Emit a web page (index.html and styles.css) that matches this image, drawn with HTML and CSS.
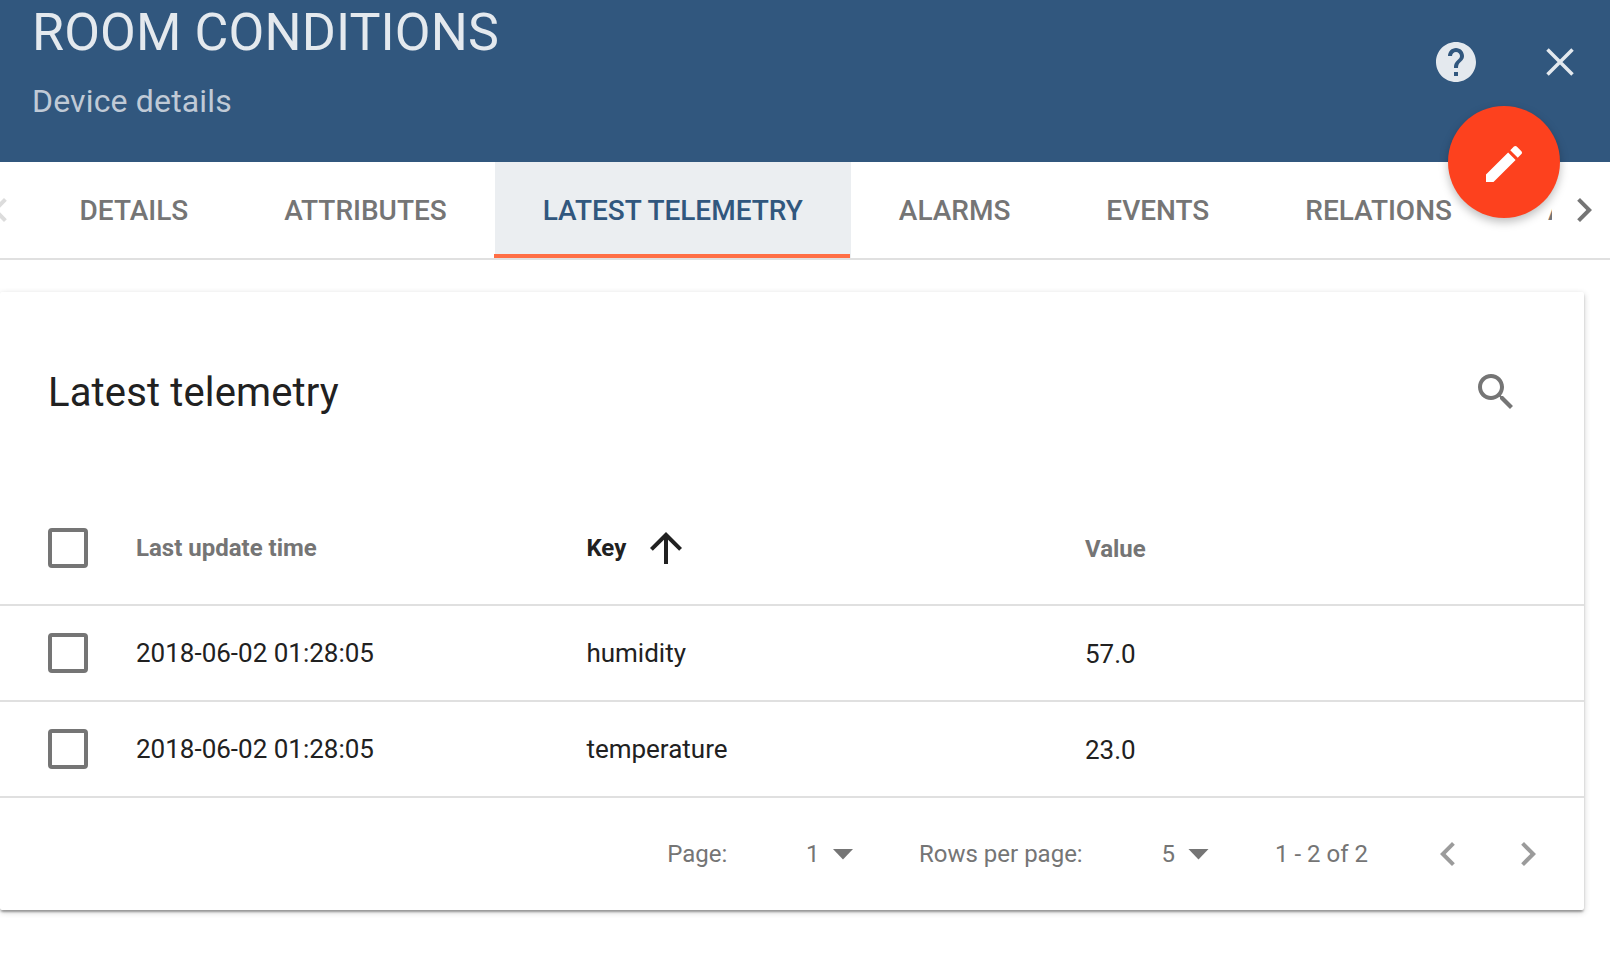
FILE: index.html
```html
<!DOCTYPE html>
<html lang="en">
<head>
<meta charset="utf-8">
<title>Device details</title>
<link rel="stylesheet" href="styles.css">
</head>
<body>
<header class="header">
  <div class="heading">
    <h1 class="title">Room conditions</h1>
    <p class="subtitle">Device details</p>
  </div>
  <div class="header-actions">
    <svg class="icon" viewBox="0 0 24 24"><path d="M12 2C6.48 2 2 6.48 2 12s4.48 10 10 10 10-4.48 10-10S17.52 2 12 2zm1 17h-2v-2h2v2zm2.07-7.75l-.9.92C13.45 12.9 13 13.5 13 15h-2v-.5c0-1.1.45-2.1 1.17-2.83l1.24-1.26c.37-.36.59-.86.59-1.41 0-1.1-.9-2-2-2s-2 .9-2 2H8c0-2.21 1.79-4 4-4s4 1.79 4 4c0 .88-.36 1.68-.93 2.25z"/></svg>
    <svg class="icon" viewBox="0 0 24 24"><path d="M5.75 5.75L18.25 18.25M18.25 5.75L5.75 18.25" fill="none" stroke="currentColor" stroke-width="1.75"/></svg>
  </div>
  <button class="fab" aria-label="Edit"><svg class="icon" viewBox="0 0 24 24"><path d="M3 17.25V21h3.75L17.81 9.94l-3.75-3.75L3 17.25zM20.71 7.04c.39-.39.39-1.02 0-1.41l-2.34-2.34c-.39-.39-1.02-.39-1.41 0l-1.83 1.83 3.75 3.75 1.83-1.83z"/></svg></button>
</header>
<nav class="tabs">
  <div class="tabs-prev"><svg class="icon" viewBox="0 0 24 24"><path d="M15.41 7.41L14 6l-6 6 6 6 1.41-1.41L10.83 12z"/></svg></div>
  <div class="tabs-canvas">
    <a class="tab">Details</a>
    <a class="tab">Attributes</a>
    <a class="tab selected">Latest telemetry</a>
    <a class="tab">Alarms</a>
    <a class="tab">Events</a>
    <a class="tab">Relations</a>
    <a class="tab">Audit logs</a>
  </div>
  <div class="tabs-next"><svg class="icon" viewBox="0 0 24 24"><path d="M10 6L8.59 7.41 13.17 12l-4.58 4.59L10 18l6-6z"/></svg></div>
</nav>
<main class="card">
  <div class="toolbar">
    <h2 class="card-title">Latest telemetry</h2>
    <svg class="icon search" viewBox="0 0 24 24"><path d="M15.5 14h-.79l-.28-.27C15.41 12.59 16 11.11 16 9.5 16 5.91 13.09 3 9.5 3S3 5.91 3 9.5 5.91 16 9.5 16c1.61 0 3.09-.59 4.23-1.57l.27.28v.79l5 4.99L20.49 19l-4.99-5zm-6 0C7.01 14 5 11.99 5 9.5S7.01 5 9.5 5 14 7.01 14 9.5 11.99 14 9.5 14z"/></svg>
  </div>
  <div class="row head">
    <span class="checkbox"></span>
    <span>Last update time</span>
    <span class="sorted">Key <svg class="icon" viewBox="0 0 24 24"><path d="M4 12l1.41 1.41L11 7.83V20h2V7.83l5.58 5.59L20 12l-8-8-8 8z"/></svg></span>
    <span class="value">Value</span>
  </div>
  <div class="row">
    <span class="checkbox"></span>
    <span>2018-06-02 01:28:05</span>
    <span>humidity</span>
    <span class="value">57.0</span>
  </div>
  <div class="row">
    <span class="checkbox"></span>
    <span>2018-06-02 01:28:05</span>
    <span>temperature</span>
    <span class="value">23.0</span>
  </div>
  <footer class="pagination">
    <span class="label-page">Page:</span>
    <span class="select select-page">1<i class="caret"></i></span>
    <span class="label-rows">Rows per page:</span>
    <span class="select select-rows">5<i class="caret"></i></span>
    <span class="range">1 - 2 of 2</span>
    <span class="pager">
      <svg class="icon" viewBox="0 0 24 24"><path d="M15.41 7.41L14 6l-6 6 6 6 1.41-1.41L10.83 12z"/></svg>
      <svg class="icon" viewBox="0 0 24 24"><path d="M10 6L8.59 7.41 13.17 12l-4.58 4.59L10 18l6-6z"/></svg>
    </span>
  </footer>
</main>
</body>
</html>
```
FILE: styles.css
```css
* { box-sizing: border-box; }
body {
  margin: 0;
  height: 970px;
  overflow: hidden;
  background: #fff;
  color: #212121;
  font-family: Roboto, "Liberation Sans", sans-serif;
}
h1, h2, p { margin: 0; font-weight: 400; }
.icon { display: block; flex: none; width: 48px; height: 48px; fill: currentColor; }

.header {
  position: relative;
  display: flex;
  justify-content: space-between;
  height: 162px;
  padding: 0 26px 0 32px;
  background: #31577e;
  color: #e4e9ee;
}
.heading { white-space: nowrap; }
.title {
  padding-top: 3px;
  font-size: 52px;
  line-height: 60px;
  letter-spacing: .13px;
  text-transform: uppercase;
}
.subtitle {
  padding-top: 18px;
  font-size: 32px;
  line-height: 40px;
  letter-spacing: .16px;
  color: #c0cad6;
}
.header-actions { display: flex; gap: 56px; padding-top: 38px; }
.fab {
  position: absolute;
  right: 50px;
  bottom: -56px;
  z-index: 2;
  display: grid;
  place-items: center;
  width: 112px;
  height: 112px;
  padding: 4px 0 0;
  border: 0;
  border-radius: 50%;
  background: #fd411e;
  color: #fff;
  box-shadow: 0 4px 10px rgba(0, 0, 0, .26);
}

.tabs {
  display: flex;
  height: 98px;
  border-bottom: 2px solid #e0e0e0;
  color: #757575;
}
.tabs-prev, .tabs-next { display: flex; align-items: center; flex: none; }
.tabs-prev { justify-content: flex-end; width: 24px; margin-right: 7.6px; color: #dcdcdc; }
.tabs-next { width: 58px; padding-left: 8px; }
.tabs-canvas { display: flex; flex: 1; min-width: 0; overflow: hidden; }
.tab {
  flex: none;
  height: 96px;
  padding: 1px 48px 0;
  font-size: 28px;
  font-weight: 500;
  line-height: 96px;
  letter-spacing: -.012px;
  text-transform: uppercase;
  white-space: nowrap;
}
.tab.selected {
  background: #ebeef1;
  color: #31577e;
}
.tab.selected::after {
  content: "";
  display: block;
  height: 4px;
  margin: -5px -47px 0 -49px;
  background: #ff6e45;
}

.card {
  width: 1584px;
  height: 618px;
  margin-top: 32px;
  border-radius: 2px;
  background: #fff;
  box-shadow: 0 2px 6px rgba(0, 0, 0, .2), 0 2px 2px rgba(0, 0, 0, .18), 0 4px 2px -2px rgba(0, 0, 0, .16);
}
.toolbar {
  display: flex;
  align-items: center;
  justify-content: space-between;
  height: 200px;
  padding: 0 64px 0 48px;
}
.card-title { padding-top: 2px; font-size: 40px; line-height: 48px; letter-spacing: .14px; }
.search { color: #757575; }
.row {
  display: grid;
  grid-template-columns: 88px 450.4px 498.6px 1fr;
  align-items: center;
  height: 96px;
  padding-left: 48px;
  border-bottom: 2px solid #e0e0e0;
  font-size: 26px;
}
.row.head {
  height: 114px;
  font-size: 24px;
  font-weight: 700;
  color: #757575;
}
.checkbox { width: 40px; height: 40px; border: 4px solid #757575; border-radius: 4px; }
.sorted { display: flex; align-items: center; gap: 15.6px; color: #212121; }
.value { padding-top: 2px; }

.pagination {
  display: flex;
  align-items: center;
  height: 112px;
  padding-left: 667.3px;
  font-size: 24px;
  color: #757575;
  white-space: nowrap;
}
.label-page { width: 138.7px; }
.label-rows { width: 242.5px; }
.select { display: flex; align-items: center; gap: 13px; }
.select-page { width: 113px; }
.select-rows { width: 113.5px; }
.range { width: 149px; }
.caret {
  width: 21px;
  height: 11px;
  background: currentColor;
  clip-path: polygon(0 0, 100% 0, 50% 100%);
}
.pager { display: flex; gap: 32px; color: #9b9b9b; }
```
